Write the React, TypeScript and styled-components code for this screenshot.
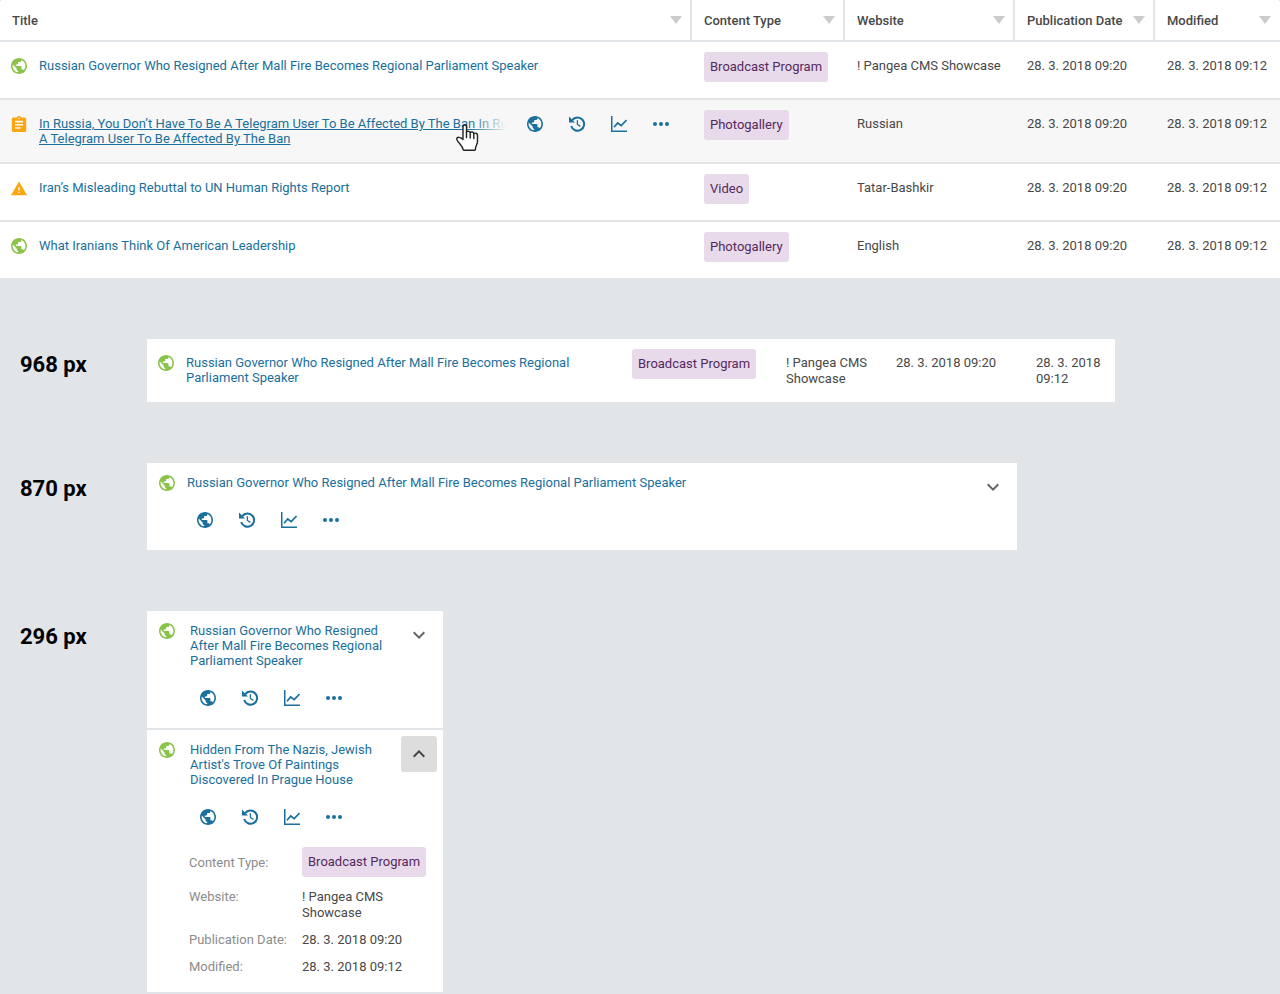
import React from "react";
import styled, { createGlobalStyle } from "styled-components";
import { MdPublic, MdAssignment, MdWarning } from "react-icons/md";

const colors = {
  page: "#e1e5e8",
  line: "#e1e5e8",
  link: "#1a6f9c",
  text: "#484848",
  muted: "#8c8c8c",
  green: "#8bc34a",
  orange: "#faa60c",
  tag: "#e8daea",
  tagText: "#55295f",
  hover: "#f7f7f7",
};

const GlobalStyle = createGlobalStyle`
  * { box-sizing: border-box; }
  body {
    margin: 0;
    background: ${colors.page};
    color: ${colors.text};
    font: 13px/16px Roboto, "Liberation Sans", sans-serif;
  }
`;

const Grid = styled.table`
  width: 100%;
  table-layout: fixed;
  border-spacing: 0;
  background: #fff;
  border-radius: 3px 3px 0 0;
`;

const Col = styled.col<{ $w?: number }>`
  width: ${(p) => (p.$w ? `${p.$w}px` : "auto")};
`;

const Th = styled.th`
  height: 42px;
  padding: 0 8px 0 12px;
  border-bottom: 2px solid ${colors.line};
  font-weight: 500;
  text-align: left;
  &:not(:last-child) {
    border-right: 2px solid ${colors.line};
  }
  &:last-child {
    padding-right: 9px;
  }
`;

const ThInner = styled.div`
  display: flex;
  align-items: center;
  justify-content: space-between;
  white-space: nowrap;
`;

const ThLabel = styled.span`
  padding-top: 2px;
`;

const SortButton = styled.button`
  display: flex;
  padding: 0;
  border: 0;
  background: none;
  &::before {
    content: "";
    border: 6px solid transparent;
    border-top: 8px solid #cccccc;
    border-bottom: 0;
  }
`;

const Row = styled.tr<{ $hover?: boolean }>`
  background: ${(p) => (p.$hover ? colors.hover : "#fff")};
  &:not(:last-child) > td {
    border-bottom: 2px solid ${colors.line};
  }
`;

const Td = styled.td`
  padding: 16px 12px 15px;
  vertical-align: top;
`;

const TagTd = styled(Td)`
  padding: 10px 12px 16px;
`;

const TitleTd = styled(Td)`
  position: relative;
  padding: 16px 24px 16px 11px;
`;

const TitleBox = styled.div`
  display: flex;
  align-items: flex-start;
  gap: 12px;
  line-height: 15px;
`;

const Link = styled.a<{ $hover?: boolean }>`
  flex: 1;
  color: ${colors.link};
  text-decoration: ${(p) => (p.$hover ? "underline" : "none")};
`;

const Status = styled.span<{ $color: string }>`
  display: flex;
  flex: none;
  height: 15px;
  color: ${(p) => p.$color};
  svg {
    flex: none;
  }
`;

const Tag = styled.span`
  display: block;
  width: fit-content;
  padding: 7px 6px;
  border-radius: 3px;
  background: ${colors.tag};
  color: ${colors.tagText};
  white-space: nowrap;
`;

const Actions = styled.div`
  display: flex;
  gap: 6px;
`;

const ActionButton = styled.button`
  display: flex;
  align-items: center;
  justify-content: center;
  width: 36px;
  height: 36px;
  padding: 0;
  border: 0;
  background: none;
  color: ${colors.link};
`;

const HoverActions = styled.div`
  position: absolute;
  top: 6px;
  right: 13px;
  padding-left: 48px;
  background: linear-gradient(to right, transparent, ${colors.hover} 38px);
`;

const Cursor = styled.svg`
  position: absolute;
  top: 24px;
  left: 455px;
`;

const Demos = styled.main`
  display: flex;
  flex-direction: column;
  gap: 61px;
  padding: 61px 0 2px;
`;

const Demo = styled.section`
  display: grid;
  grid-template-columns: 127px minmax(0, 1fr);
  padding-left: 20px;
`;

const DemoLabel = styled.h2`
  margin: 13px 0 0;
  color: #000;
  font-size: 22px;
  line-height: 26px;
  font-weight: 700;
`;

const Stack = styled.div<{ $max: number }>`
  display: flex;
  flex-direction: column;
  gap: 2px;
  max-width: ${(p) => p.$max}px;
`;

const Plain = styled(Grid)`
  border-radius: 0;
`;

const Card = styled.article`
  display: grid;
  grid-template-columns: auto minmax(0, 1fr) 36px;
  padding: 12px 6px 12px 12px;
  background: #fff;
`;

const CardBody = styled.div<{ $indent: number }>`
  display: flex;
  flex-direction: column;
  gap: 12px;
  padding-left: ${(p) => p.$indent}px;
  line-height: 15px;
`;

const Toggle = styled.button<{ $open?: boolean }>`
  display: flex;
  align-items: center;
  justify-content: center;
  width: 36px;
  height: 36px;
  margin-top: -6px;
  padding: 0;
  border: 0;
  border-radius: 3px;
  background: ${(p) => (p.$open ? "#dddddd" : "none")};
  color: ${(p) => (p.$open ? "#444444" : "#666666")};
`;

const Details = styled.dl`
  display: grid;
  grid-template-columns: 101px 1fr;
  gap: 11px 12px;
  margin: 0 -30px 5px -1px;
  line-height: 16px;
`;

const Term = styled.dt<{ $tall?: boolean }>`
  padding: ${(p) => (p.$tall ? "8px 0 7px" : 0)};
  color: ${colors.muted};
`;

const Value = styled.dd`
  margin: 0;
`;

const GlobeIcon = () => <MdPublic size={16} viewBox="2 2 20 20" />;

const HistoryIcon = () => (
  <svg width="16" height="16" viewBox="0 0 16 16" fill="none" stroke="currentColor" aria-hidden="true">
    <path d="M3.2 4.200A6.600 6.600 0 1 1 2.200 10" strokeWidth="2" />
    <path d="M8.400 4.200v4.300l3 1.900" strokeWidth="1.300" />
    <path d="M0 .6v6h6z" fill="currentColor" stroke="none" />
  </svg>
);

const ChartIcon = () => (
  <svg width="16" height="16" viewBox="0 0 16 16" fill="none" stroke="currentColor" aria-hidden="true">
    <path d="M.75 0v15.250H16" strokeWidth="1.5" />
    <path d="M3 11.200L6.700 7l3.500 2.700L15.600 4" strokeWidth="1.7" />
  </svg>
);

const MoreIcon = () => (
  <svg width="16" height="16" viewBox="0 0 16 16" fill="currentColor" aria-hidden="true">
    <circle cx="2" cy="8" r="2" />
    <circle cx="8" cy="8" r="2" />
    <circle cx="14" cy="8" r="2" />
  </svg>
);

const Chevron = ({ up }: { up?: boolean }) => (
  <svg width="12" height="8" viewBox="0 0 12 8" fill="none" stroke="currentColor" strokeWidth="2" aria-hidden="true">
    <path d={up ? "M.7 6.7L6 1.4l5.3 5.3" : "M.7 1.3L6 6.600l5.3-5.3"} />
  </svg>
);

const StatusIcon = ({ kind }: { kind: string }) => {
  if (kind === "draft") return <Status $color={colors.orange}><MdAssignment size={16} viewBox="2 1 20 20" /></Status>;
  if (kind === "warning") return <Status $color={colors.orange}><MdWarning size={16} viewBox="1 0 22 22" /></Status>;
  return <Status $color={colors.green}><GlobeIcon /></Status>;
};

const ActionBar = () => (
  <Actions>
    <ActionButton aria-label="View on site"><GlobeIcon /></ActionButton>
    <ActionButton aria-label="History"><HistoryIcon /></ActionButton>
    <ActionButton aria-label="Statistics"><ChartIcon /></ActionButton>
    <ActionButton aria-label="More"><MoreIcon /></ActionButton>
  </Actions>
);

const governor = "Russian Governor Who Resigned After Mall Fire Becomes Regional Parliament Speaker";
const published = "28. 3. 2018 09:20";
const modified = "28. 3. 2018 09:12";

type RowData = { kind: string; title: string; type: string; site: string; hover?: boolean };

const rows: RowData[] = [
  { kind: "live", title: governor, type: "Broadcast Program", site: "! Pangea CMS Showcase" },
  {
    kind: "draft",
    title:
      "In Russia, You Don’t Have To Be A Telegram User To Be Affected By The Ban In Russia, You Don’t Have To Be A Telegram User To Be Affected By The Ban",
    type: "Photogallery",
    site: "Russian",
    hover: true,
  },
  { kind: "warning", title: "Iran’s Misleading Rebuttal to UN Human Rights Report", type: "Video", site: "Tatar-Bashkir" },
  { kind: "live", title: "What Iranians Think Of American Leadership", type: "Photogallery", site: "English" },
];

const ArticleRow = ({ row }: { row: RowData }) => (
  <Row $hover={row.hover}>
    <TitleTd>
      <TitleBox>
        <StatusIcon kind={row.kind} />
        <Link href="#" $hover={row.hover}>{row.title}</Link>
      </TitleBox>
      {row.hover && (
        <>
          <HoverActions><ActionBar /></HoverActions>
          <Cursor width="24" height="28" viewBox="0 0 24 28" fill="#fff" stroke="#222" strokeWidth="1.4" strokeLinejoin="round" strokeLinecap="round" aria-hidden="true">
            <path d="M8 15.500V2.700c0-2.300 3.500-2.300 3.500 0V8c.5-1 3.300-1 3.700.6.600-1 3.300-.8 3.600 1 .8-.9 3.700-.6 3.700 1.400v6.500c0 2.500-2 4.500-2 7v.8c0 .7-.3 1-1 1H9c-.7 0-1-.3-1-1 0-3-3.800-5.300-6-9.300-1-1.800.6-3 2.300-2.600 1.500.300 2.700 1 3.700 2.100z" />
            <path d="M11.500 8v5.500M15.200 9v5M18.800 10v4.500" fill="none" />
          </Cursor>
        </>
      )}
    </TitleTd>
    <TagTd><Tag>{row.type}</Tag></TagTd>
    <Td>{row.site}</Td>
    <Td>{published}</Td>
    <Td>{modified}</Td>
  </Row>
);

const ArticleCard = ({ title, indent, open }: { title: string; indent: number; open?: boolean }) => (
  <Card>
    <StatusIcon kind="live" />
    <CardBody $indent={indent}>
      <Link href="#">{title}</Link>
      <ActionBar />
      {open && (
        <Details>
          <Term $tall>Content Type:</Term>
          <Value><Tag>Broadcast Program</Tag></Value>
          <Term>Website:</Term>
          <Value>! Pangea CMS Showcase</Value>
          <Term>Publication Date:</Term>
          <Value>{published}</Value>
          <Term>Modified:</Term>
          <Value>{modified}</Value>
        </Details>
      )}
    </CardBody>
    <Toggle $open={open} aria-expanded={!!open} aria-label="Toggle details"><Chevron up={open} /></Toggle>
  </Card>
);

export default function App() {
  return (
    <>
      <GlobalStyle />
      <Grid>
        <colgroup>
          <Col /><Col $w={153} /><Col $w={170} /><Col $w={140} /><Col $w={125} />
        </colgroup>
        <thead>
          <tr>
            {["Title", "Content Type", "Website", "Publication Date", "Modified"].map((h) => (
              <Th key={h}>
                <ThInner>
                  <ThLabel>{h}</ThLabel>
                  <SortButton aria-label={`Sort by ${h}`} />
                </ThInner>
              </Th>
            ))}
          </tr>
        </thead>
        <tbody>{rows.map((r) => <ArticleRow key={r.title} row={r} />)}</tbody>
      </Grid>
      <Demos>
        <Demo>
          <DemoLabel>968 px</DemoLabel>
          <Stack $max={968}>
            <Plain>
              <colgroup>
                <Col /><Col $w={154} /><Col $w={110} /><Col $w={140} /><Col $w={91} />
              </colgroup>
              <tbody><ArticleRow row={rows[0]} /></tbody>
            </Plain>
          </Stack>
        </Demo>
        <Demo>
          <DemoLabel>870 px</DemoLabel>
          <Stack $max={870}><ArticleCard title={governor} indent={12} /></Stack>
        </Demo>
        <Demo>
          <DemoLabel>296 px</DemoLabel>
          <Stack $max={296}>
            <ArticleCard title={governor} indent={15} />
            <ArticleCard title="Hidden From The Nazis, Jewish Artist's Trove Of Paintings Discovered In Prague House" indent={15} open />
          </Stack>
        </Demo>
      </Demos>
    </>
  );
}
